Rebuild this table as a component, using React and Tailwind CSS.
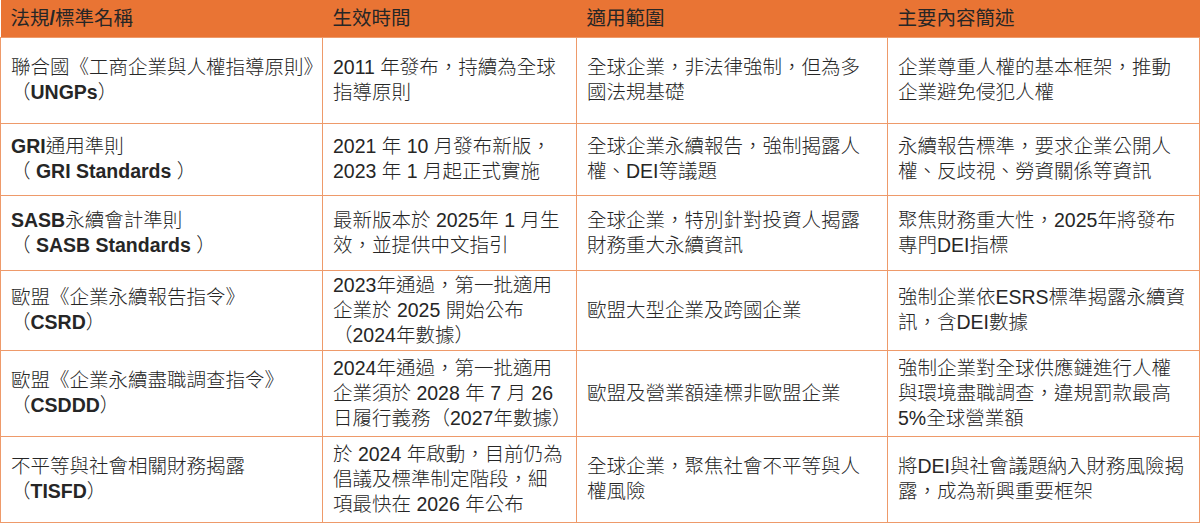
import React from "react";

const B = ({ children }) => <span className="font-bold">{children}</span>;

const rows = [
  {
    h: "h-[86px]",
    cells: [
      ["聯合國《工商企業與人權指導原則》", <>（<B>UNGPs</B>）</>],
      ["2011 年發布，持續為全球", "指導原則"],
      ["全球企業，非法律強制，但為多", "國法規基礎"],
      ["企業尊重人權的基本框架，推動", "企業避免侵犯人權"],
    ],
  },
  {
    h: "h-[72px]",
    cells: [
      [<><B>GRI</B>通用準則</>, <>（ <B>GRI Standards</B> ）</>],
      ["2021 年 10 月發布新版，", "2023 年 1 月起正式實施"],
      ["全球企業永續報告，強制揭露人", "權、DEI等議題"],
      ["永續報告標準，要求企業公開人", "權、反歧視、勞資關係等資訊"],
    ],
  },
  {
    h: "h-[75px]",
    cells: [
      [<><B>SASB</B>永續會計準則</>, <>（ <B>SASB Standards</B> ）</>],
      ["最新版本於 2025年 1 月生", "效，並提供中文指引"],
      ["全球企業，特別針對投資人揭露", "財務重大永續資訊"],
      ["聚焦財務重大性，2025年將發布", "專門DEI指標"],
    ],
  },
  {
    h: "h-[80px]",
    cells: [
      ["歐盟《企業永續報告指令》", <>（<B>CSRD</B>）</>],
      ["2023年通過，第一批適用", "企業於 2025 開始公布", "（2024年數據）"],
      ["歐盟大型企業及跨國企業"],
      ["強制企業依ESRS標準揭露永續資", "訊，含DEI數據"],
    ],
  },
  {
    h: "h-[86px]",
    cells: [
      ["歐盟《企業永續盡職調查指令》", <>（<B>CSDDD</B>）</>],
      ["2024年通過，第一批適用", "企業須於 2028 年 7 月 26", "日履行義務（2027年數據）"],
      ["歐盟及營業額達標非歐盟企業"],
      ["強制企業對全球供應鏈進行人權", "與環境盡職調查，違規罰款最高", "5%全球營業額"],
    ],
  },
  {
    h: "h-[86px]",
    cells: [
      ["不平等與社會相關財務揭露", <>（<B>TISFD</B>）</>],
      ["於 2024 年啟動，目前仍為", "倡議及標準制定階段，細", "項最快在 2026 年公布"],
      ["全球企業，聚焦社會不平等與人", "權風險"],
      ["將DEI與社會議題納入財務風險揭", "露，成為新興重要框架"],
    ],
  },
];

const headers = ["法規/標準名稱", "生效時間", "適用範圍", "主要內容簡述"];

export default function App() {
  return (
    <div
      className="w-[1200px] h-[527px] bg-white text-[#262626] text-[19.5px] leading-[25px]"
      style={{ fontFamily: '"Liberation Sans", "Noto Sans CJK TC", sans-serif' }}
    >
      <table className="border-collapse table-fixed w-[1199px]">
        <colgroup>
          <col className="w-[322px]" />
          <col className="w-[254px]" />
          <col className="w-[311px]" />
          <col className="w-[312px]" />
        </colgroup>
        <thead>
          <tr className="h-[37px] bg-[#E97434]">
            {headers.map((t, i) => (
              <th key={i} className="text-left font-normal pl-[10px] align-middle p-0">
                <span className="whitespace-nowrap">
                  {t === "法規/標準名稱" ? (
                    <>法規<span className="font-bold">/</span>標準名稱</>
                  ) : (
                    t
                  )}
                </span>
              </th>
            ))}
          </tr>
        </thead>
        <tbody>
          {rows.map((r, ri) => (
            <tr key={ri} className={r.h}>
              {r.cells.map((lines, ci) => (
                <td
                  key={ci}
                  className="border border-[#EE9A6A] pl-[10px] pr-0 py-0 align-middle font-light"
                >
                  {lines.map((l, li) => (
                    <div key={li} className="whitespace-nowrap">
                      {l}
                    </div>
                  ))}
                </td>
              ))}
            </tr>
          ))}
        </tbody>
      </table>
    </div>
  );
}
